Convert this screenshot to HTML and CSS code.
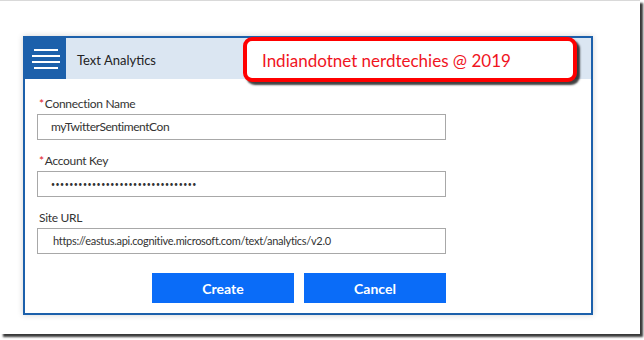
FILE: index.html
```html
<!DOCTYPE html>
<html>
<head>
<meta charset="utf-8">
<link rel="stylesheet" href="styles.css">
</head>
<body>
<div class="frame">
  <div class="panel">
    <div class="header">
      <div class="menu">
        <svg width="30" height="22" viewBox="0 0 30 22">
          <g stroke="#fff" stroke-width="2">
            <line x1="2" y1="2" x2="26" y2="2"/>
            <line x1="0" y1="8" x2="28" y2="8"/>
            <line x1="0" y1="14" x2="28" y2="14"/>
            <line x1="2" y1="20" x2="26" y2="20"/>
          </g>
        </svg>
      </div>
      <div class="title">Text Analytics</div>
    </div>
    <div class="callout">Indiandotnet nerdtechies @ 2019</div>
    <div class="body">
      <div class="field">
        <div class="label"><span class="req">*</span>Connection Name</div>
        <div class="input">myTwitterSentimentCon</div>
      </div>
      <div class="field">
        <div class="label"><span class="req">*</span>Account Key</div>
        <div class="input"><span class="dots">••••••••••••••••••••••••••••••••</span></div>
      </div>
      <div class="field">
        <div class="label">Site URL</div>
        <div class="input url">https://eastus.api.cognitive.microsoft.com/text/analytics/v2.0</div>
      </div>
      <div class="actions">
        <div class="btn">Create</div>
        <div class="btn">Cancel</div>
      </div>
    </div>
  </div>
</div>
</body>
</html>
```
FILE: styles.css
```css
html, body {
  margin: 0;
  padding: 0;
  background: #fff;
}
body {
  width: 644px;
  height: 340px;
  overflow: hidden;
  font-family: Lato, "Open Sans", sans-serif;
  color: #333;
}
.frame {
  width: 640px;
  height: 334px;
  box-sizing: border-box;
  border-top: 1px solid #d9d9d9;
  padding: 35px 0 0 23px;
  background: #fff;
  box-shadow: 3px 3px 2px rgba(0, 0, 0, 0.78);
}
.panel {
  position: relative;
  width: 570px;
  height: 279px;
  box-sizing: border-box;
  border: 2px solid #1c60ab;
  background: #fff;
  box-shadow: 0 0 6px rgba(0, 0, 0, 0.18);
}
.header {
  display: flex;
  align-items: center;
  height: 41px;
  background: #dbe6f2;
}
.menu {
  width: 41px;
  height: 41px;
  background: #1c60ab;
  display: flex;
  align-items: center;
  justify-content: center;
}
.menu svg {
  display: block;
  margin-left: 2px;
  margin-top: 1px;
}
.title {
  margin-left: 11px;
  font-size: 13px;
  color: #222;
  padding-top: 2px;
}
.callout {
  position: absolute;
  left: 218px;
  top: -1px;
  width: 334px;
  height: 45px;
  box-sizing: border-box;
  border: 4px solid #ff0000;
  border-radius: 9px;
  background: #fff;
  box-shadow: 3px 3px 2px rgba(0, 0, 0, 0.75);
  color: #f0141e;
  font-size: 17px;
  display: flex;
  align-items: center;
  padding-left: 15px;
  padding-top: 1px;
}
.body {
  padding: 17px 0 0 12px;
  display: flex;
  flex-direction: column;
  width: 409px;
}
.field {
  display: flex;
  flex-direction: column;
  margin-bottom: 13px;
}
.label {
  font-size: 12px;
  line-height: 16px;
  height: 16px;
  margin-bottom: 2px;
  padding-left: 2px;
  color: #333;
  letter-spacing: -0.3px;
}
.req {
  color: #e0161b;
  margin-right: 1px;
}
.input {
  height: 26px;
  box-sizing: border-box;
  border: 1px solid #a8a8a8;
  padding-left: 13px;
  font-size: 12px;
  line-height: 24px;
  color: #333;
  white-space: nowrap;
  overflow: hidden;
  letter-spacing: -0.45px;
}
.url {
  padding-left: 15px;
  font-size: 11px;
  letter-spacing: -0.3px;
}
.dots {
  font-size: 7px;
  letter-spacing: 0.5px;
  color: #333;
  vertical-align: top;
}
.actions {
  display: flex;
  justify-content: flex-end;
  gap: 10px;
  margin-top: 6px;
}
.btn {
  width: 142px;
  height: 30px;
  background: #0a6cf8;
  color: #fff;
  font-weight: bold;
  font-size: 14px;
  display: flex;
  align-items: center;
  justify-content: center;
}
```
